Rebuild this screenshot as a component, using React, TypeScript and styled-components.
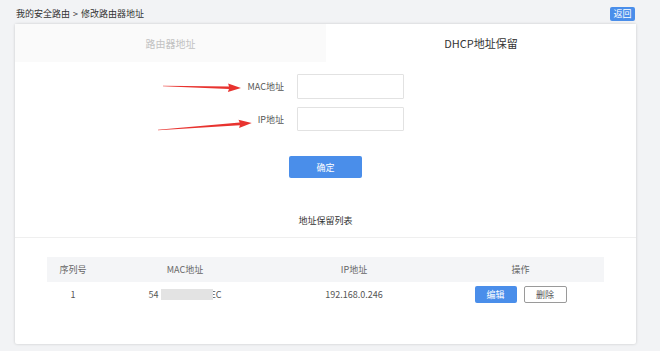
import React from 'react';
import styled, { createGlobalStyle } from 'styled-components';

const GlobalStyle = createGlobalStyle`
  html, body {
    margin: 0;
    padding: 0;
    background: #f2f3f5;
    font-family: "Noto Sans CJK SC", "Noto Sans", sans-serif;
    color: #333;
  }
`;

const BLUE = '#4a8eea';

interface Entry {
  id: number;
  macHead: string;
  macTail: string;
  ip: string;
}

const entries: Entry[] = [{ id: 1, macHead: '54', macTail: 'EC', ip: '192.168.0.246' }];

// annotation arrows (panel coordinates)
const arrows = [
  { x: 148, y: 62, len: 78, angle: 1.5 },
  { x: 143, y: 106, len: 94, angle: -4.3 },
];

function Arrow({ x, y, len, angle }: { x: number; y: number; len: number; angle: number }) {
  const L = len;
  const pts = `0,-0.3 ${L - 12},-1.3 ${L - 13},-4.2 ${L},0 ${L - 13},4.2 ${L - 12},1.3 0,0.3`;
  return <polygon points={pts} fill="#e8332f" transform={`translate(${x} ${y}) rotate(${angle})`} />;
}

export default function App() {
  return (
    <Page>
      <GlobalStyle />
      <TopBar>
        <Crumbs>我的安全路由 &gt; 修改路由器地址</Crumbs>
        <BackButton>返回</BackButton>
      </TopBar>
      <Panel>
        <Annotations width="300" height="140">
          {arrows.map((a, i) => (
            <Arrow key={i} {...a} />
          ))}
        </Annotations>
        <Tabs>
          <Tab>路由器地址</Tab>
          <Tab $active>DHCP地址保留</Tab>
        </Tabs>
        <Form>
          <FormRow>
            <Label>MAC地址</Label>
            <Input $h={25} />
          </FormRow>
          <FormRow>
            <Label>IP地址</Label>
            <Input $h={24} />
          </FormRow>
        </Form>
        <ConfirmRow>
          <PrimaryButton $w={73} $h={22}>确定</PrimaryButton>
        </ConfirmRow>
        <ListTitle>地址保留列表</ListTitle>
        <Table>
          <HeadRow>
            <Cell>序列号</Cell>
            <Cell>MAC地址</Cell>
            <Cell>IP地址</Cell>
            <Cell>操作</Cell>
          </HeadRow>
          {entries.map((e) => (
            <Row key={e.id}>
              <Cell>{e.id}</Cell>
              <Cell>
                {e.macHead}
                <Blur />
                {e.macTail}
              </Cell>
              <Cell>{e.ip}</Cell>
              <Cell>
                <Actions>
                  <PrimaryButton $w={42} $h={17}>编辑</PrimaryButton>
                  <GhostButton>删除</GhostButton>
                </Actions>
              </Cell>
            </Row>
          ))}
        </Table>
      </Panel>
    </Page>
  );
}

const Page = styled.div`
  width: 660px;
  height: 351px;
  box-sizing: border-box;
  padding: 5px 24px 0 15px;
  overflow: hidden;
`;

const TopBar = styled.div`
  height: 17px;
  display: flex;
  align-items: center;
  justify-content: space-between;
`;

const Crumbs = styled.div`
  font-size: 9px;
  color: #333;
  padding-left: 1px;
  word-spacing: 1px;
`;

const BackButton = styled.button`
  height: 14px;
  width: 25px;
  padding: 0;
  margin-right: 1px;
  border: none;
  border-radius: 2px;
  background: ${BLUE};
  color: #fff;
  font-family: inherit;
  font-size: 9px;
  line-height: 14px;
`;

const Panel = styled.div`
  position: relative;
  margin-top: 2px;
  height: 320px;
  background: #fff;
  border-radius: 2px;
  box-shadow: 0 0 3px rgba(0, 0, 0, 0.18);
`;

const Annotations = styled.svg`
  position: absolute;
  left: 0;
  top: 0;
  pointer-events: none;
`;

const Tabs = styled.div`
  display: grid;
  grid-template-columns: 311px 1fr;
  height: 38px;
`;

const Tab = styled.div<{ $active?: boolean }>`
  display: flex;
  align-items: center;
  justify-content: center;
  background: ${(p) => (p.$active ? '#fff' : '#fafafa')};
  color: ${(p) => (p.$active ? '#333' : '#c2c2c2')};
  font-size: ${(p) => (p.$active ? '11px' : '10px')};
`;

const Form = styled.div`
  margin-top: 12px;
  display: flex;
  flex-direction: column;
  gap: 8px;
`;

const FormRow = styled.div`
  display: flex;
  align-items: center;
`;

const Label = styled.div`
  width: 269px;
  margin-right: 13px;
  text-align: right;
  font-size: 9px;
  color: #555;
`;

const Input = styled.input<{ $h: number }>`
  width: 107px;
  height: ${(p) => p.$h}px;
  box-sizing: border-box;
  border: 1px solid #e2e2e2;
  border-radius: 1px;
  outline: none;
`;

const ConfirmRow = styled.div`
  margin-top: 25px;
  display: flex;
  justify-content: center;
`;

const PrimaryButton = styled.button<{ $w: number; $h: number }>`
  width: ${(p) => p.$w}px;
  height: ${(p) => p.$h}px;
  padding: 0;
  border: none;
  border-radius: 2px;
  background: ${BLUE};
  color: #fff;
  font-family: inherit;
  font-size: 9px;
`;

const GhostButton = styled.button`
  width: 43px;
  height: 17px;
  padding: 0;
  box-sizing: border-box;
  border: 1px solid #9a9a9a;
  border-radius: 2px;
  background: #fff;
  color: #555;
  font-family: inherit;
  font-size: 9px;
`;

const ListTitle = styled.div`
  margin-top: 36px;
  line-height: 14px;
  padding-bottom: 9px;
  border-bottom: 1px solid #efefef;
  text-align: center;
  font-size: 9px;
  color: #333;
`;

const Table = styled.div`
  margin: 19px 32px 0 32px;
`;

const HeadRow = styled.div`
  display: grid;
  grid-template-columns: 52px 172px 166px 1fr;
  height: 25px;
  align-items: center;
  background: #f4f5f7;
  color: #666;
  font-size: 9px;
`;

const Row = styled(HeadRow)`
  background: #fff;
  color: #555;
`;

const Cell = styled.div`
  display: flex;
  align-items: center;
  justify-content: center;
`;

const Blur = styled.span`
  position: relative;
  z-index: 1;
  display: inline-block;
  width: 52px;
  height: 11px;
  margin: 0 -3px 0 3px;
  background: #e3e3e3;
`;

const Actions = styled.div`
  display: flex;
  gap: 7px;
`;
